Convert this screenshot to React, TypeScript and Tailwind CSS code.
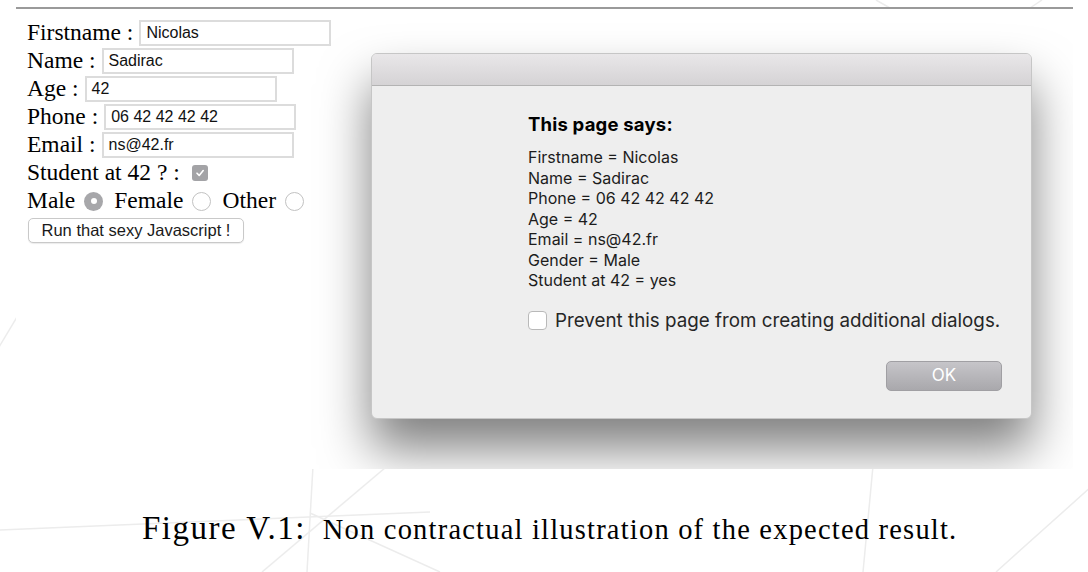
import React from 'react';

const fields = [
    { label: 'Firstname :', value: 'Nicolas' },
    { label: 'Name :', value: 'Sadirac' },
    { label: 'Age :', value: '42' },
    { label: 'Phone :', value: '06 42 42 42 42' },
    { label: 'Email :', value: 'ns@42.fr' },
];

const alertLines = [
    'Firstname = Nicolas',
    'Name = Sadirac',
    'Phone = 06 42 42 42 42',
    'Age = 42',
    'Email = ns@42.fr',
    'Gender = Male',
    'Student at 42 = yes',
];

const Radio = ({ checked }: { checked?: boolean }) =>
    checked ? (
        <span className="flex shrink-0 items-center justify-center w-[19px] h-[19px] rounded-full bg-[#a7a7aa]">
            <span className="block w-[6px] h-[6px] rounded-full bg-white" />
        </span>
    ) : (
        <span className="block shrink-0 w-[19px] h-[19px] rounded-full bg-white border border-[#c2c2c2]" />
    );

const Backdrop = () => (
    <svg className="absolute inset-0" width="1088" height="572" viewBox="0 0 1088 572">
        <g stroke="#ececec" strokeWidth="1.5" fill="none">
            <line x1="-4" y1="352" x2="44" y2="272" />
            <line x1="262" y1="572" x2="392" y2="462" />
            <line x1="313" y1="466" x2="307" y2="572" />
            <line x1="0" y1="530" x2="430" y2="512" />
            <line x1="310" y1="513" x2="440" y2="572" />
            <line x1="873" y1="466" x2="863" y2="572" />
            <line x1="1092" y1="486" x2="996" y2="572" />
            <line x1="876" y1="0" x2="890" y2="8" />
            <line x1="1042" y1="0" x2="1030" y2="8" />
        </g>
    </svg>
);

const AlertDialog = () => (
    <div className="absolute left-[355px] top-[44px] w-[661px] h-[366px] rounded-[6px] bg-[#eeeeee] border border-[#c6c6c6] shadow-[0_30px_50px_rgba(0,0,0,0.5)] overflow-hidden font-['Inter',sans-serif] text-[#1c1c1c]">
        <div className="h-[32px] bg-gradient-to-b from-[#e9e7e9] to-[#d5d3d5] border-b border-[#b3b3b3]" />
        <div className="flex flex-col pl-[156px] pr-[29px] pt-[27px]">
            <div className="text-[18.5px] leading-[22px] font-bold tracking-[0.2px] text-black">This page says:</div>
            <div className="mt-[12px] text-[16px] leading-[20.5px]">
                {alertLines.map((line) => (
                    <div key={line}>{line}</div>
                ))}
            </div>
            <div className="flex items-center mt-[18px] h-[24px]">
                <span className="block shrink-0 w-[19px] h-[19px] rounded-[4px] bg-white border border-[#b9b9b9]" />
                <span className="ml-[8px] text-[18.8px] leading-[24px] text-[#262626] whitespace-nowrap">
                    Prevent this page from creating additional dialogs.
                </span>
            </div>
            <div className="flex justify-end mt-[28px]">
                <button className="w-[116px] h-[30px] rounded-[5px] border border-[#a09fa3] bg-gradient-to-b from-[#c6c5c9] to-[#a9a8ac] text-white text-[17px] leading-none">
                    OK
                </button>
            </div>
        </div>
    </div>
);

export default function App() {
    return (
        <div className="relative w-[1088px] h-[572px] bg-white overflow-hidden">
            <Backdrop />
            <div className="relative flex flex-col">
                <div className="relative ml-[16px] mt-[7px] w-[1057px] h-[462px] bg-white border-t-2 border-[#9a9a9a] overflow-hidden">
                    <div className="flex flex-col pl-[11px] pt-[10px] font-['Liberation_Serif',serif] text-[23.5px] text-black">
                        {fields.map((f) => (
                            <div key={f.label} className="flex items-center h-[28px]">
                                <span className="leading-none">{f.label}</span>
                                <div className="ml-[6px] w-[192px] h-[26px] flex items-center px-[5px] bg-white border-2 border-[#dcdcdc] font-['Liberation_Sans',sans-serif] text-[16px] text-[#111]">
                                    {f.value}
                                </div>
                            </div>
                        ))}
                        <div className="flex items-center h-[28px]">
                            <span className="leading-none">Student at 42 ? :</span>
                            <span className="ml-[12px] flex items-center justify-center w-[16px] h-[16px] rounded-[3px] bg-[#a3a3a6]">
                                <svg width="10" height="10" viewBox="0 0 10 10">
                                    <path d="M2 5.2 L4.2 7.4 L8.2 2.6" stroke="white" strokeWidth="1.6" fill="none" strokeLinecap="round" strokeLinejoin="round" />
                                </svg>
                            </span>
                        </div>
                        <div className="flex items-center h-[28px]">
                            <span className="leading-none">Male</span>
                            <span className="ml-[9px] mr-[11px]"><Radio checked /></span>
                            <span className="leading-none">Female</span>
                            <span className="ml-[9px] mr-[11px]"><Radio /></span>
                            <span className="leading-none">Other</span>
                            <span className="ml-[9px]"><Radio /></span>
                        </div>
                        <div className="flex mt-[3px]">
                            <button className="ml-[1px] w-[216px] h-[25px] rounded-[5px] border border-[#c9c9c9] bg-white shadow-[0_1px_1px_rgba(0,0,0,0.08)] font-['Liberation_Sans',sans-serif] text-[16.5px] leading-none text-[#1a1a1a]">
                                Run that sexy Javascript !
                            </button>
                        </div>
                    </div>
                    <AlertDialog />
                </div>
                <div className="flex items-baseline pl-[142px] mt-[40px] font-['Liberation_Serif',serif] text-black leading-[38px] whitespace-nowrap">
                    <span className="text-[33px] tracking-[1.5px]">Figure V.1:</span>
                    <span className="ml-[17px] text-[28.5px] tracking-[1.2px]">
                        Non contractual illustration of the expected result.
                    </span>
                </div>
            </div>
        </div>
    );
}
